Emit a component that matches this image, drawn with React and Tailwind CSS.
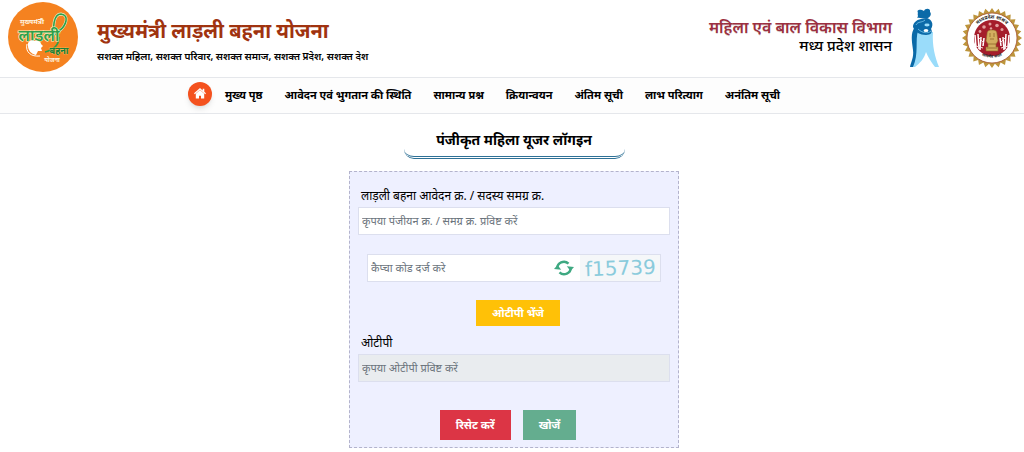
import React, { useState } from 'react';

const navLinks = [
  'मुख्य पृष्ठ',
  'आवेदन एवं भुगतान की स्थिति',
  'सामान्य प्रश्न',
  'क्रियान्वयन',
  'अंतिम सूची',
  'लाभ परित्याग',
  'अनंतिम सूची',
];

const SchemeLogo = () => (
  <svg viewBox="0 0 72 72" className="w-[72px] h-[72px] shrink-0" role="img" aria-label="लाड़ली बहना योजना">
    <circle cx="36" cy="36" r="35" fill="#f58220" />
    <path d="M50 35C44 28 47 13 54 13C63 14 59 25 52 30" fill="none" stroke="#e9f0c8" strokeWidth="2.8" />
    <path d="M50 35C44 28 47 13 54 13C63 14 59 25 52 30M52 36C52 44 46 49 38 51" fill="none" stroke="#2f9e4a" strokeWidth="1.6" />
    <text x="25" y="23" textAnchor="middle" fontSize="7" fontWeight="700" fill="#fff3df">मुख्यमंत्री</text>
    <text x="32" y="40" textAnchor="middle" fontSize="16" fontWeight="600" fill="#2f9e4a" stroke="#f4f2c4" strokeWidth="1.2" paintOrder="stroke">लाड़ली</text>
    <path d="M21 45C20 40 25 38 28 40C31 39 34 41 34 43L36 45L34 47L35 50L31 50L29 54C24 53 21 49 21 45Z" fill="#fff" />
    <path d="M20 43C18 51 24 56 33 55" fill="none" stroke="#fff" strokeWidth="1" />
    <text x="52" y="53" textAnchor="middle" fontSize="9" fontWeight="700" fill="#16803a" stroke="#f0d27a" strokeWidth="0.5" paintOrder="stroke">बहना</text>
    <text x="45" y="61" textAnchor="middle" fontSize="6" fontWeight="700" fill="#fff3df">योजना</text>
  </svg>
);

const DepartmentMark = () => (
  <svg viewBox="0 0 30 60" className="w-[30px] h-[60px] shrink-0" aria-hidden="true">
    <path d="M6 21C3 32 7 46 2 59L5 59C10 55 14 51 16 44C18 49 21 54 25 59L29 59C25 49 22 38 23 24Z" fill="#9adcfa" />
    <path d="M5 19C0 25 2 34 3 42C4 49 1 54 0 59L3 59C9 46 5 32 8 23Z" fill="#0b6aa8" />
    <path d="M8 5C6 1 11 1 14 3C15 0 21 0 20 4C22 6 20 9 18 10C15 12 10 9 7 10C9 8 7 6 8 5Z" fill="#0b6aa8" />
    <path d="M11 11C6 12 3 15 3 19C5 24 10 27 16 27C21 27 23 24 21 21C24 16 22 12 17 10Z" fill="#0b6aa8" />
    <path d="M6 17C8 13 12 15 15 12M8 21C12 25 18 26 21 23" fill="none" stroke="#8ed6f7" strokeWidth="0.7" />
    <ellipse cx="17" cy="17" rx="2.6" ry="1.4" fill="#9adcfa" />
    <ellipse cx="16" cy="22.5" rx="2.4" ry="1.5" fill="#fff" />
  </svg>
);

const sealTeeth = Array.from({ length: 56 }, (_, i) => {
  const r = i % 2 ? 26 : 30;
  const a = (i * Math.PI) / 28;
  return `${30 + r * Math.sin(a)},${30 - r * Math.cos(a)}`;
}).join(' ');

const StateSeal = () => (
  <svg viewBox="0 0 60 60" className="w-[60px] h-[60px] shrink-0" role="img" aria-label="मध्य प्रदेश शासन">
    <defs>
      <path id="seal-top" d="M10.5 30A19.5 19.5 0 0 1 49.5 30" />
      <path id="seal-bottom" d="M8 32A22.5 22.5 0 0 0 52 32" />
    </defs>
    <polygon points={sealTeeth} fill="#bd953c" />
    <circle cx="30" cy="30" r="25" fill="#fff" stroke="#a5522d" strokeWidth="0.8" />
    <circle cx="30" cy="30" r="18" fill="#a51d2b" />
    <g fill="#e2a09f">
      <circle cx="22" cy="19" r="1.8" />
      <circle cx="28" cy="16" r="1.5" />
      <circle cx="35" cy="17.5" r="1.8" />
      <circle cx="40" cy="21.5" r="1.5" />
      <circle cx="18" cy="23.5" r="1.4" />
      <circle cx="29" cy="20.5" r="1.2" />
    </g>
    <path d="M13 27L14 39M16 26L17 41M19 29L18 42M22 30L21 38M38 30L39 38M41 29L42 42M44 26L43 41M47 27L46 39" stroke="#fff" strokeWidth="1.5" />
    <path d="M17 30L22 35M43 30L38 35M14 38L21 40M46 38L39 40" stroke="#f5dede" strokeWidth="1" />
    <path d="M25 26C25 22 28 22 30 22C32 22 35 22 35 26L36 33L34 36V39H36V43H24V39H26V36L24 33Z" fill="#d3ad5f" stroke="#8f642a" strokeWidth="0.6" />
    <path d="M28 25V29M32 25V29M28 31H32M26 36H34M25 40H35" stroke="#8f642a" strokeWidth="0.8" />
    <text fontSize="5" fontWeight="700" fill="#222">
      <textPath href="#seal-top" startOffset="50%" textAnchor="middle">मध्यप्रदेश शासन</textPath>
    </text>
    <text fontSize="4" fontWeight="700" fill="#222">
      <textPath href="#seal-bottom" startOffset="50%" textAnchor="middle">सत्यमेव जयते</textPath>
    </text>
  </svg>
);

const HomeIcon = () => (
  <svg viewBox="0 0 12 11" className="w-3 h-[11px]" fill="#fff" aria-hidden="true">
    <path d="M6 0L0 5.3L.8 6.2L6 1.8L11.2 6.2L12 5.3L10.3 3.8V.7H8.7V2.4Z" />
    <path d="M6 2.1L1.8 5.7V10.5H5V7.8H7V10.5H10.2V5.7Z" />
  </svg>
);

const RefreshIcon = () => (
  <svg viewBox="0 0 20 16" className="w-5 h-4" aria-hidden="true">
    <path d="M3.4 8.5A6.5 6.2 0 0 1 14.5 3.6M16.6 7.5A6.5 6.2 0 0 1 5.5 12.4" fill="none" stroke="#3fa982" strokeWidth="2.5" />
    <path d="M0 9L3.5 5L7.2 9.8ZM20 7L16.5 11L12.8 6.2Z" fill="#3fa982" />
  </svg>
);

const Header = () => (
  <header className="flex items-center justify-between h-[78px] pl-[7px] pr-[2px] pb-1 border-b border-gray-200">
    <div className="flex items-center gap-[18px]">
      <SchemeLogo />
      <div className="pt-2">
        <h1 className="text-[20px] leading-[30px] font-bold text-[#a0330f]">मुख्यमंत्री लाड़ली बहना योजना</h1>
        <p className="text-[10px] leading-5 font-semibold text-black">
          सशक्त महिला, सशक्त परिवार, सशक्त समाज, सशक्त प्रदेश, सशक्त देश
        </p>
      </div>
    </div>
    <div className="flex items-center pt-[2px]">
      <div className="text-right mr-[18px] pb-1">
        <p className="text-[16px] leading-[18px] font-semibold text-[#9c3040] text-shadow-2xs">महिला एवं बाल विकास विभाग</p>
        <p className="text-[15px] leading-[18px] font-medium text-black">मध्य प्रदेश शासन</p>
      </div>
      <DepartmentMark />
      <div className="ml-[22px]">
        <StateSeal />
      </div>
    </div>
  </header>
);

const NavBar = () => (
  <nav className="flex items-center justify-center h-9 pr-14 pb-1 bg-[#fdfdfd] border-b border-gray-200">
    <a
      href="#home"
      aria-label="होम"
      className="flex items-center justify-center w-6 h-6 mr-[13px] rounded-full bg-[#f4511e] shadow-md"
    >
      <HomeIcon />
    </a>
    <ul className="flex gap-[22px]">
      {navLinks.map((label) => (
        <li key={label} className="leading-5">
          <a href="#top" className="text-[11px] font-bold text-black whitespace-nowrap">{label}</a>
        </li>
      ))}
    </ul>
  </nav>
);

const LoginForm = () => {
  const [regNo, setRegNo] = useState('');
  const [captcha, setCaptcha] = useState('');

  const handleReset = () => {
    setRegNo('');
    setCaptcha('');
  };

  return (
    <form
      onSubmit={(e) => e.preventDefault()}
      onReset={handleReset}
      className="w-full max-w-[330px] mt-3 px-2 pt-3 pb-[7px] bg-[#eef0ff] border border-dashed border-[#b3b3cc]"
    >
      <label htmlFor="regno" className="block pl-[3px] text-[12px] leading-[23px] text-black">
        लाड़ली बहना आवेदन क्र. / सदस्य समग्र क्र.
      </label>
      <input
        id="regno"
        type="text"
        value={regNo}
        onChange={(e) => setRegNo(e.target.value)}
        placeholder="कृपया पंजीयन क्र. / समग्र क्र. प्रविष्ट करें"
        className="block w-full h-7 px-[3px] pb-[2px] text-[11px] bg-white border border-[#dcdfee] placeholder:text-[#6c757d]"
      />

      <div className="flex items-center h-7 mt-[19px] mx-[9px] bg-white border border-[#dcdfee]">
        <input
          type="text"
          aria-label="कैप्चा कोड"
          value={captcha}
          onChange={(e) => setCaptcha(e.target.value)}
          placeholder="कैप्चा कोड दर्ज करे"
          className="flex-1 min-w-0 h-full px-[3px] pb-[2px] text-[11px] placeholder:text-[#6c757d]"
        />
        <button type="button" aria-label="नया कैप्चा" className="mr-[6px]">
          <RefreshIcon />
        </button>
        <svg viewBox="0 0 80 26" className="w-20 h-[26px] bg-[#f5f7f9]" role="img" aria-label="f15739">
          <text x="5" y="20" fontSize="20" fill="#8acbdc" fontFamily="DejaVu Sans" transform="rotate(-2 40 13)">f15739</text>
        </svg>
      </div>

      <div className="flex justify-center mt-[18px] pl-2">
        <button type="button" className="h-[26px] px-4 text-[11px] font-bold text-white bg-[#ffc107]">
          ओटीपी भेंजे
        </button>
      </div>

      <label htmlFor="otp" className="block mt-[5px] pl-[3px] text-[12px] leading-[23px] text-black">ओटीपी</label>
      <input
        id="otp"
        type="text"
        disabled
        placeholder="कृपया ओटीपी प्रविष्ट करें"
        className="block w-full h-7 px-[3px] pb-[2px] text-[11px] bg-[#e9ecef] border border-[#dcdfee] placeholder:text-[#6c757d]"
      />

      <div className="flex justify-center gap-3 mt-7 pr-3">
        <button type="reset" className="h-[30px] px-4 text-[11px] font-bold text-white bg-[#dc3545]">रिसेट करें</button>
        <button type="submit" className="h-[30px] px-4 text-[11px] font-bold text-white bg-[#64ad8f]">खोजें</button>
      </div>
    </form>
  );
};

const App = () => (
  <div className="min-h-screen bg-white font-['Noto_Sans','Noto_Sans_Devanagari',sans-serif]">
    <Header />
    <NavBar />
    <main className="flex flex-col items-center pt-[9px] pl-1">
      <h2 className="w-full max-w-[221px] h-9 text-center text-[14px] leading-[34px] font-bold text-black whitespace-nowrap rounded-b-[10px] border-b-3 border-double border-[#2f7196] bg-white">
        पंजीकृत महिला यूजर लॉगइन
      </h2>
      <LoginForm />
    </main>
  </div>
);

export default App;
